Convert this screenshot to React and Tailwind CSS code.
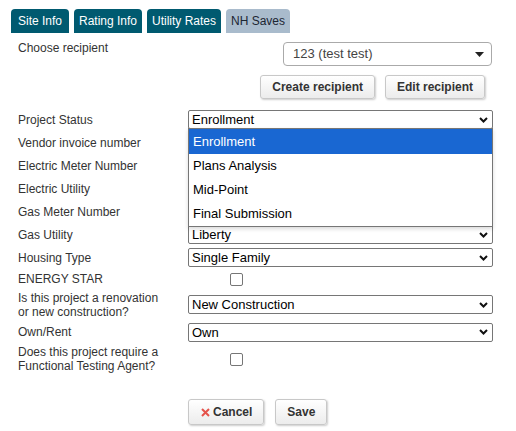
import React from 'react';

const Chevron = () => (
  <svg width="9" height="6" viewBox="0 0 9 6" className="shrink-0">
    <path d="M1 1 L4.5 4.5 L8 1" fill="none" stroke="#111" strokeWidth="2" />
  </svg>
);

const FakeSelect = ({ value }) => (
  <div className="w-[305px] h-[19px] border border-[#767676] rounded-[2px] bg-white flex items-center justify-between pl-[3px] pr-[4px] text-[13px] text-black leading-none">
    <span>{value}</span>
    <Chevron />
  </div>
);

const TextBox = () => (
  <div className="w-[305px] h-[19px] border border-[#767676] rounded-[2px] bg-white" />
);

const Check = () => (
  <div className="ml-[42px] w-[13px] h-[13px] border border-[#767676] rounded-[2px] bg-white" />
);

const Row = ({ label, h = 'h-[23px]', children }) => (
  <div className={`flex items-center ${h}`}>
    <div className="w-[170px] leading-[14px]">{label}</div>
    {children}
  </div>
);

const Button = ({ children, className = '' }) => (
  <button className={`h-[24px] px-[11px] rounded-[3px] border border-[#c8c8c8] bg-gradient-to-b from-white to-[#ececec] shadow-[1px_1px_2px_rgba(0,0,0,0.2)] font-bold text-[12px] text-[#333] flex items-center ${className}`}>
    {children}
  </button>
);

export default function App() {
  const tabs = [
    { name: 'Site Info', w: 'w-[58px]' },
    { name: 'Rating Info', w: 'w-[68px]' },
    { name: 'Utility Rates', w: 'w-[74px]' },
  ];
  const statuses = ['Enrollment', 'Plans Analysis', 'Mid-Point', 'Final Submission'];

  return (
    <div className="w-[516px] h-[431px] bg-white font-['Liberation_Sans',Arial,sans-serif] text-[12px] text-[#333]">
      {/* Tabs */}
      <div className="flex gap-[5px] pl-[11px] pt-[9px]">
        {tabs.map((t) => (
          <div key={t.name} className={`${t.w} h-[24px] rounded-t-[4px] bg-[#005a70] text-white flex items-center justify-center`}>
            {t.name}
          </div>
        ))}
        <div className="w-[64px] h-[24px] rounded-t-[4px] bg-[#a9bbcc] text-[#1c2633] flex items-center justify-center">
          NH Saves
        </div>
      </div>

      {/* Recipient */}
      <div className="flex justify-between pl-[18px] pr-[24px] pt-[8px]">
        <div className="leading-[14px]">Choose recipient</div>
        <div className="mt-[1px] w-[209px] h-[24px] border border-[#aaa] rounded-[4px] bg-white flex items-center justify-between pl-[9px] pr-[7px] text-[13px] text-[#444]">
          <span>123 (test test)</span>
          <svg width="9" height="5" viewBox="0 0 9 5">
            <path d="M0 0 L9 0 L4.5 5 Z" fill="#222" />
          </svg>
        </div>
      </div>
      <div className="flex justify-end gap-[10px] pr-[31px] pt-[9px]">
        <Button>Create recipient</Button>
        <Button>Edit recipient</Button>
      </div>

      {/* Form */}
      <div className="pl-[18px] pt-[9px]">
        <Row label="Project Status">
          <div className="relative">
            <FakeSelect value="Enrollment" />
            <div className="absolute left-0 top-[18px] w-[305px] z-10 bg-white border border-[#767676] text-[13px] text-black shadow-[0_2px_4px_rgba(0,0,0,0.15)]">
              {statuses.map((s, i) => (
                <div
                  key={s}
                  className={`flex items-center pl-[4px] ${i === 0 ? 'h-[25px] bg-[#1967d2] text-white' : 'h-[24px]'}`}
                >
                  {s}
                </div>
              ))}
            </div>
          </div>
        </Row>
        <Row label="Vendor invoice number"><TextBox /></Row>
        <Row label="Electric Meter Number"><TextBox /></Row>
        <Row label="Electric Utility"><FakeSelect value="" /></Row>
        <Row label="Gas Meter Number"><TextBox /></Row>
        <Row label="Gas Utility"><FakeSelect value="Liberty" /></Row>
        <Row label="Housing Type"><FakeSelect value="Single Family" /></Row>
        <Row label="ENERGY STAR" h="h-[20px]"><Check /></Row>
        <Row
          label={<>Is this project a renovation<br />or new construction?</>}
          h="h-[31px]"
        >
          <FakeSelect value="New Construction" />
        </Row>
        <Row label="Own/Rent" h="h-[24px]"><FakeSelect value="Own" /></Row>
        <Row
          label={<>Does this project require a<br />Functional Testing Agent?</>}
          h="h-[30px]"
        >
          <Check />
        </Row>
      </div>

      {/* Actions */}
      <div className="flex gap-[11px] pl-[188px] pt-[25px]">
        <Button className="h-[26px] pl-[12px] pr-[11px] gap-[3px]">
          <svg width="9" height="9" viewBox="0 0 9 9">
            <path d="M1 1 L8 8 M8 1 L1 8" stroke="#e5534b" strokeWidth="2" />
          </svg>
          Cancel
        </Button>
        <Button className="h-[26px] px-[11px]">Save</Button>
      </div>
    </div>
  );
}
